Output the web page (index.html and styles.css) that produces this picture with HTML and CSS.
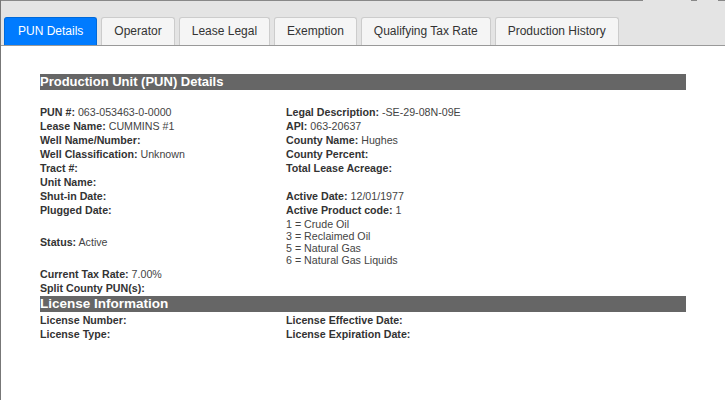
FILE: index.html
```html
<!DOCTYPE html>
<html lang="en">
<head>
    <meta charset="UTF-8">
    <meta name="viewport" content="width=device-width, initial-scale=1.0">
    <title>PUN Details</title>
    <link rel="stylesheet" href="styles.css">
</head>
<body>
    <div class="window">
        <div class="topline">
            <span class="seg seg-main"></span>
            <span class="seg seg-small"></span>
            <span class="seg seg-end"></span>
        </div>

        <div class="tabs">
            <div class="tab active">PUN Details</div>
            <div class="tab">Operator</div>
            <div class="tab">Lease Legal</div>
            <div class="tab">Exemption</div>
            <div class="tab">Qualifying Tax Rate</div>
            <div class="tab">Production History</div>
        </div>

        <div class="panel">
            <div class="section-title">Production Unit (PUN) Details</div>
            <table class="fields">
                <tr>
                    <td class="left"><b>PUN #:</b> 063-053463-0-0000</td>
                    <td><b>Legal Description:</b> -SE-29-08N-09E</td>
                </tr>
                <tr>
                    <td><b>Lease Name:</b> CUMMINS #1</td>
                    <td><b>API:</b> 063-20637</td>
                </tr>
                <tr>
                    <td><b>Well Name/Number:</b></td>
                    <td><b>County Name:</b> Hughes</td>
                </tr>
                <tr>
                    <td><b>Well Classification:</b> Unknown</td>
                    <td><b>County Percent:</b></td>
                </tr>
                <tr>
                    <td><b>Tract #:</b></td>
                    <td><b>Total Lease Acreage:</b></td>
                </tr>
                <tr>
                    <td><b>Unit Name:</b></td>
                    <td></td>
                </tr>
                <tr>
                    <td><b>Shut-in Date:</b></td>
                    <td><b>Active Date:</b> 12/01/1977</td>
                </tr>
                <tr>
                    <td><b>Plugged Date:</b></td>
                    <td><b>Active Product code:</b> 1</td>
                </tr>
                <tr>
                    <td><b>Status:</b> Active</td>
                    <td>
                        <div>1 = Crude Oil</div>
                        <div>3 = Reclaimed Oil</div>
                        <div>5 = Natural Gas</div>
                        <div>6 = Natural Gas Liquids</div>
                    </td>
                </tr>
                <tr>
                    <td><b>Current Tax Rate:</b> 7.00%</td>
                    <td></td>
                </tr>
                <tr>
                    <td><b>Split County PUN(s):</b></td>
                    <td></td>
                </tr>
            </table>

            <div class="section-title license">License Information</div>
            <table class="fields">
                <tr>
                    <td class="left"><b>License Number:</b></td>
                    <td><b>License Effective Date:</b></td>
                </tr>
                <tr>
                    <td><b>License Type:</b></td>
                    <td><b>License Expiration Date:</b></td>
                </tr>
            </table>
        </div>
    </div>
</body>
</html>
```

FILE: styles.css
```css
body {
    margin: 0;
    padding: 0;
    font-family: "Liberation Sans", Arial, sans-serif;
    background-color: #fff;
    color: #333;
}
.window {
    min-height: 100vh;
    border-left: 1px solid #777;
}
.topline {
    display: flex;
    height: 1px;
    background-color: #e4e4e4;
}
.seg {
    display: block;
    height: 1px;
    background-color: #888;
}
.seg-main {
    width: 642px;
}
.seg-small {
    width: 6px;
    margin-left: 48px;
}
.seg-end {
    width: 7px;
    margin-left: 21px;
}
.tabs {
    display: flex;
    gap: 4px;
    padding: 16px 0 0 3px;
    background-color: #e4e4e4;
    border-bottom: 1px solid #999;
}
.tab {
    padding: 0 12px;
    line-height: 27px;
    font-size: 12px;
    color: #333;
    background-color: #f5f5f5;
    border: 1px solid #ccc;
    border-bottom: none;
    border-radius: 3px 3px 0 0;
}
.tab.active {
    padding: 0 13px;
    color: #fff;
    background-color: #007bff;
    border-color: #0069d9;
}
.panel {
    padding: 28px 0 0 39px;
}
.section-title {
    width: 646px;
    height: 16px;
    line-height: 16px;
    margin-bottom: 15px;
    background-color: #666;
    color: #fff;
    font-size: 13px;
    font-weight: bold;
}
.section-title.license {
    margin-top: 1px;
    margin-bottom: 1px;
    font-size: 13.5px;
}
.fields {
    width: 646px;
    border-collapse: collapse;
    border-spacing: 0;
    font-size: 8pt;
}
.fields td {
    padding: 1px 0;
    line-height: 12px;
    vertical-align: middle;
    color: #444;
}
.fields td.left {
    width: 246px;
}
.fields b {
    color: #333;
}
```
